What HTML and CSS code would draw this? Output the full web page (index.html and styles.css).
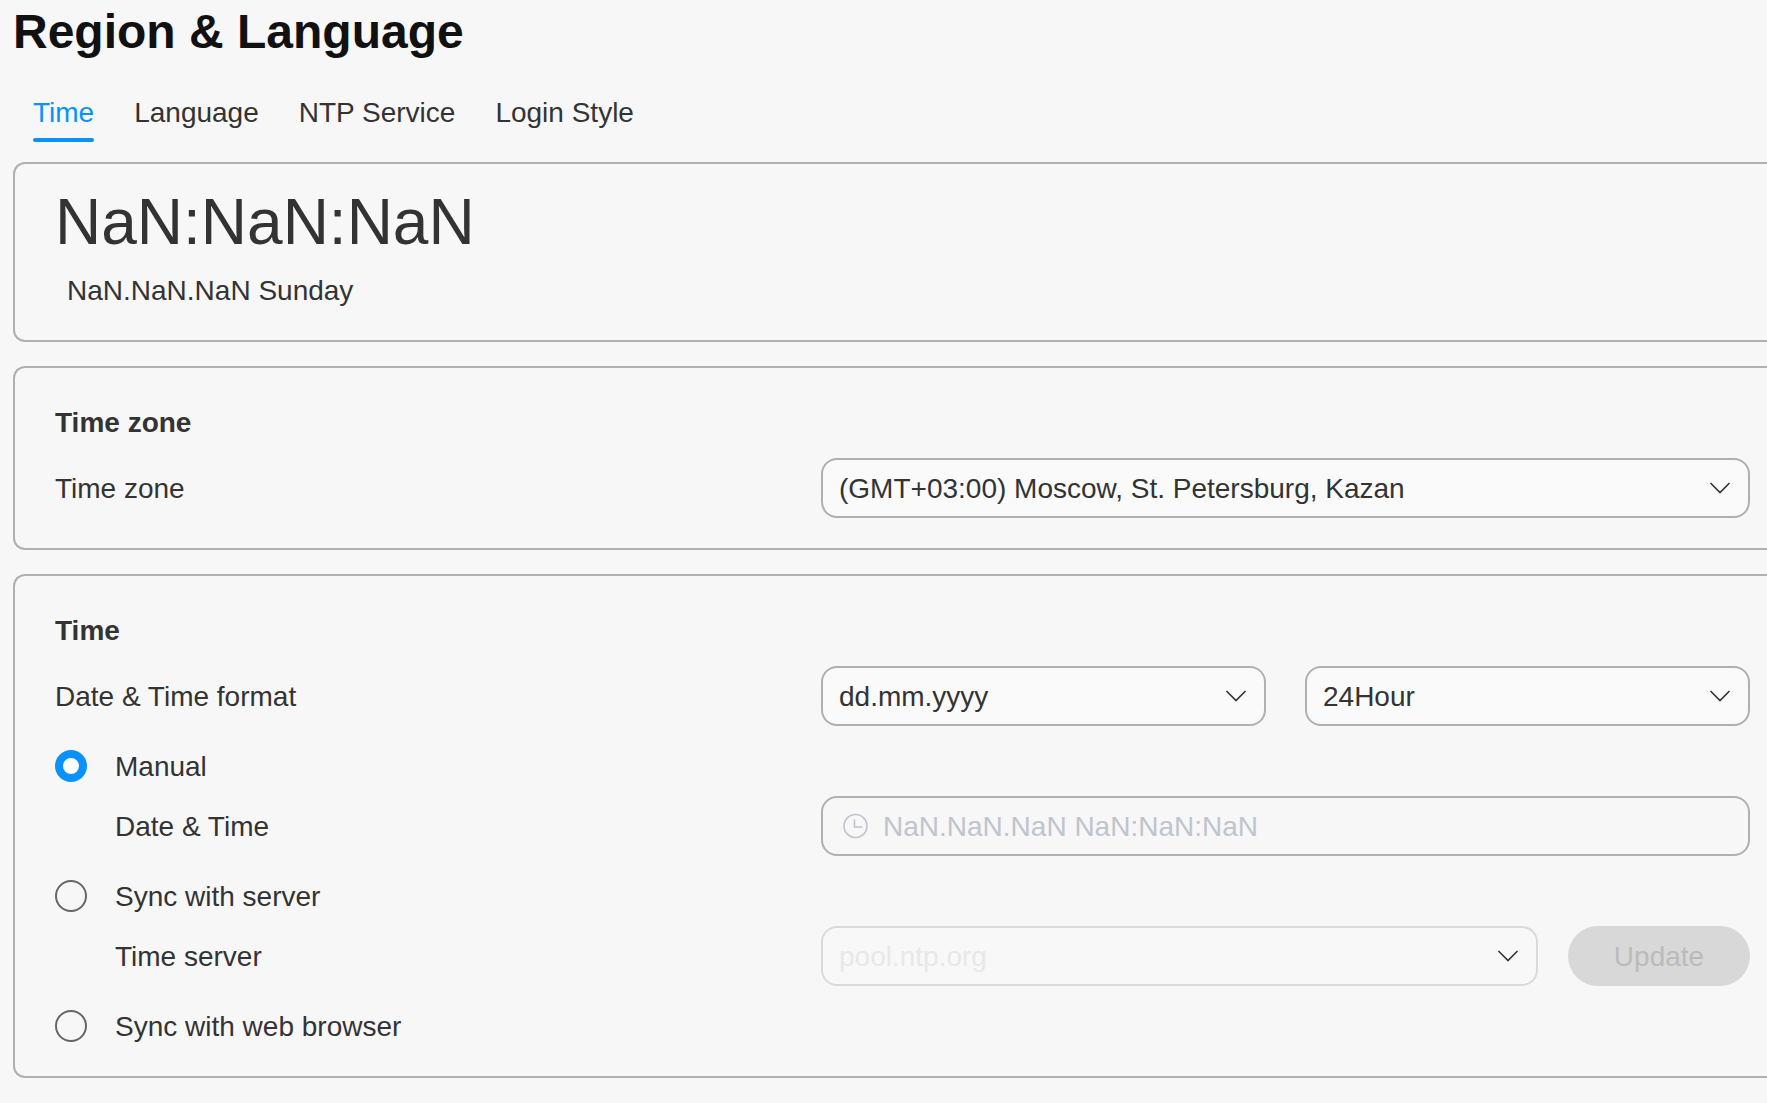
FILE: index.html
```html
<!DOCTYPE html>
<html lang="en">
<head>
    <meta charset="UTF-8">
    <meta name="viewport" content="width=device-width, initial-scale=1.0">
    <title>Region &amp; Language</title>
    <link rel="stylesheet" href="styles.css">
</head>
<body>
    <main class="page">
        <h1 class="page-title">Region &amp; Language</h1>
        <nav class="tabs">
            <a href="#" class="tab active">Time</a>
            <a href="#" class="tab">Language</a>
            <a href="#" class="tab">NTP Service</a>
            <a href="#" class="tab">Login Style</a>
        </nav>

        <section class="card clock-card">
            <div class="clock-time">NaN:NaN:NaN</div>
            <div class="clock-date">NaN.NaN.NaN Sunday</div>
        </section>

        <section class="card zone-card">
            <h2>Time zone</h2>
            <div class="row">
                <label for="time-zone">Time zone</label>
                <div class="controls">
                    <div class="select">
                        <select id="time-zone">
                            <option>(GMT+03:00) Moscow, St. Petersburg, Kazan</option>
                        </select>
                        <svg class="chevron" viewBox="0 0 22 12"><path d="M1.500 1l9.500 9.500L20.500 1"/></svg>
                    </div>
                </div>
            </div>
        </section>

        <section class="card time-card">
            <h2>Time</h2>
            <div class="row">
                <label for="date-format">Date &amp; Time format</label>
                <div class="controls format-controls">
                    <div class="select">
                        <select id="date-format">
                            <option>dd.mm.yyyy</option>
                        </select>
                        <svg class="chevron" viewBox="0 0 22 12"><path d="M1.500 1l9.500 9.500L20.500 1"/></svg>
                    </div>
                    <div class="select">
                        <select id="hour-format" aria-label="Hour format">
                            <option>24Hour</option>
                        </select>
                        <svg class="chevron" viewBox="0 0 22 12"><path d="M1.500 1l9.500 9.500L20.500 1"/></svg>
                    </div>
                </div>
            </div>

            <label class="option">
                <input type="radio" name="sync" checked>
                <span>Manual</span>
            </label>
            <div class="row">
                <label class="sub-label" for="date-time">Date &amp; Time</label>
                <div class="controls">
                    <div class="date-field">
                        <svg class="clock-icon" viewBox="0 0 26 26"><circle cx="12.500" cy="13" r="11.500"/><path d="M11.500 6.500V14H19.500"/></svg>
                        <input type="text" id="date-time" value="NaN.NaN.NaN NaN:NaN:NaN">
                    </div>
                </div>
            </div>

            <label class="option">
                <input type="radio" name="sync">
                <span>Sync with server</span>
            </label>
            <div class="row">
                <label class="sub-label" for="time-server">Time server</label>
                <div class="controls server-controls">
                    <div class="select">
                        <select id="time-server" disabled>
                            <option>pool.ntp.org</option>
                        </select>
                        <svg class="chevron" viewBox="0 0 22 12"><path d="M1.500 1l9.500 9.500L20.500 1"/></svg>
                    </div>
                    <button type="button" class="update-btn" disabled>Update</button>
                </div>
            </div>

            <label class="option">
                <input type="radio" name="sync">
                <span>Sync with web browser</span>
            </label>
        </section>
    </main>
</body>
</html>
```
FILE: styles.css
```css
* {
    box-sizing: border-box;
}
body {
    margin: 0;
    background: #f7f7f7;
    color: #333;
    font-family: "Liberation Sans", Arial, Helvetica, sans-serif;
    font-size: 28px;
    line-height: 42px;
}
.page {
    padding-left: 13px;
}
.page-title {
    margin: 0 0 28px;
    color: #111;
    font-size: 48px;
    line-height: 64px;
}

/* Tabs */
.tabs {
    display: flex;
    gap: 40px;
    padding-left: 20px;
    margin-bottom: 20px;
}
.tab {
    color: #333;
    text-decoration: none;
}
.tab::after {
    content: "";
    display: block;
    height: 4px;
    margin-top: 4px;
    border-radius: 2px;
}
.tab.active {
    color: #0a91fb;
}
.tab.active::after {
    background: #0a91fb;
}

/* Cards run off the right edge */
.card {
    margin-bottom: 24px;
    border: 2px solid #b0b0b0;
    border-right: 0;
    border-radius: 12px 0 0 12px;
    padding: 34px 17px 30px 40px;
}
.card h2 {
    margin: 0 0 14px;
    font-size: 28px;
}
.clock-card {
    padding-top: 18px;
    padding-bottom: 28px;
}
.clock-time {
    margin-bottom: 8px;
    font-size: 64px;
    line-height: 80px;
}
.clock-date {
    padding-left: 12px;
}
.time-card {
    padding-bottom: 20px;
}

/* Form rows */
.row {
    display: grid;
    grid-template-columns: minmax(0, 766fr) minmax(0, 929fr);
    align-items: center;
}
.row label,
.option span {
    padding-top: 2px;
}
.row .sub-label {
    padding-left: 60px;
}
.controls {
    display: flex;
}
.format-controls {
    gap: 39px;
}
.server-controls {
    gap: 30px;
}
.select {
    position: relative;
    flex: 1;
}
.select select,
.date-field {
    display: block;
    width: 100%;
    height: 60px;
    border: 2px solid #b0b0b0;
    border-radius: 16px;
}
.select select {
    appearance: none;
    padding: 2px 60px 0 16px;
    background: #fafafa;
    color: #333;
    font: inherit;
}
.select select:disabled {
    border-color: #dadada;
    background: #f8f8f8;
    color: #e9e7e7;
    opacity: 1;
}
.chevron {
    position: absolute;
    top: 24px;
    right: 19px;
    width: 22px;
    height: 12px;
    fill: none;
    stroke: #333;
    stroke-width: 1.6;
    pointer-events: none;
}
.date-field {
    display: flex;
    align-items: center;
    gap: 14px;
    padding: 0 20px;
}
.date-field input {
    flex: 1;
    min-width: 0;
    border: 0;
    padding: 2px 0 0;
    background: none;
    color: #c0c4cc;
    font: inherit;
}
.clock-icon {
    width: 26px;
    height: 26px;
    fill: none;
    stroke: #c0c4cc;
    stroke-width: 1.6;
}
.update-btn {
    width: 182px;
    height: 60px;
    border: 0;
    border-radius: 30px;
    padding: 2px 0 0;
    background: #d8d8d8;
    color: #bbb;
    font: inherit;
}

/* Radios */
.option {
    display: flex;
    align-items: center;
    gap: 28px;
    height: 60px;
    margin-top: 10px;
}
.option input {
    appearance: none;
    width: 32px;
    height: 32px;
    margin: 0;
    border: 2px solid #666;
    border-radius: 50%;
}
.option input:checked {
    border: 8px solid #0a91fb;
    background: #fff;
}
```
